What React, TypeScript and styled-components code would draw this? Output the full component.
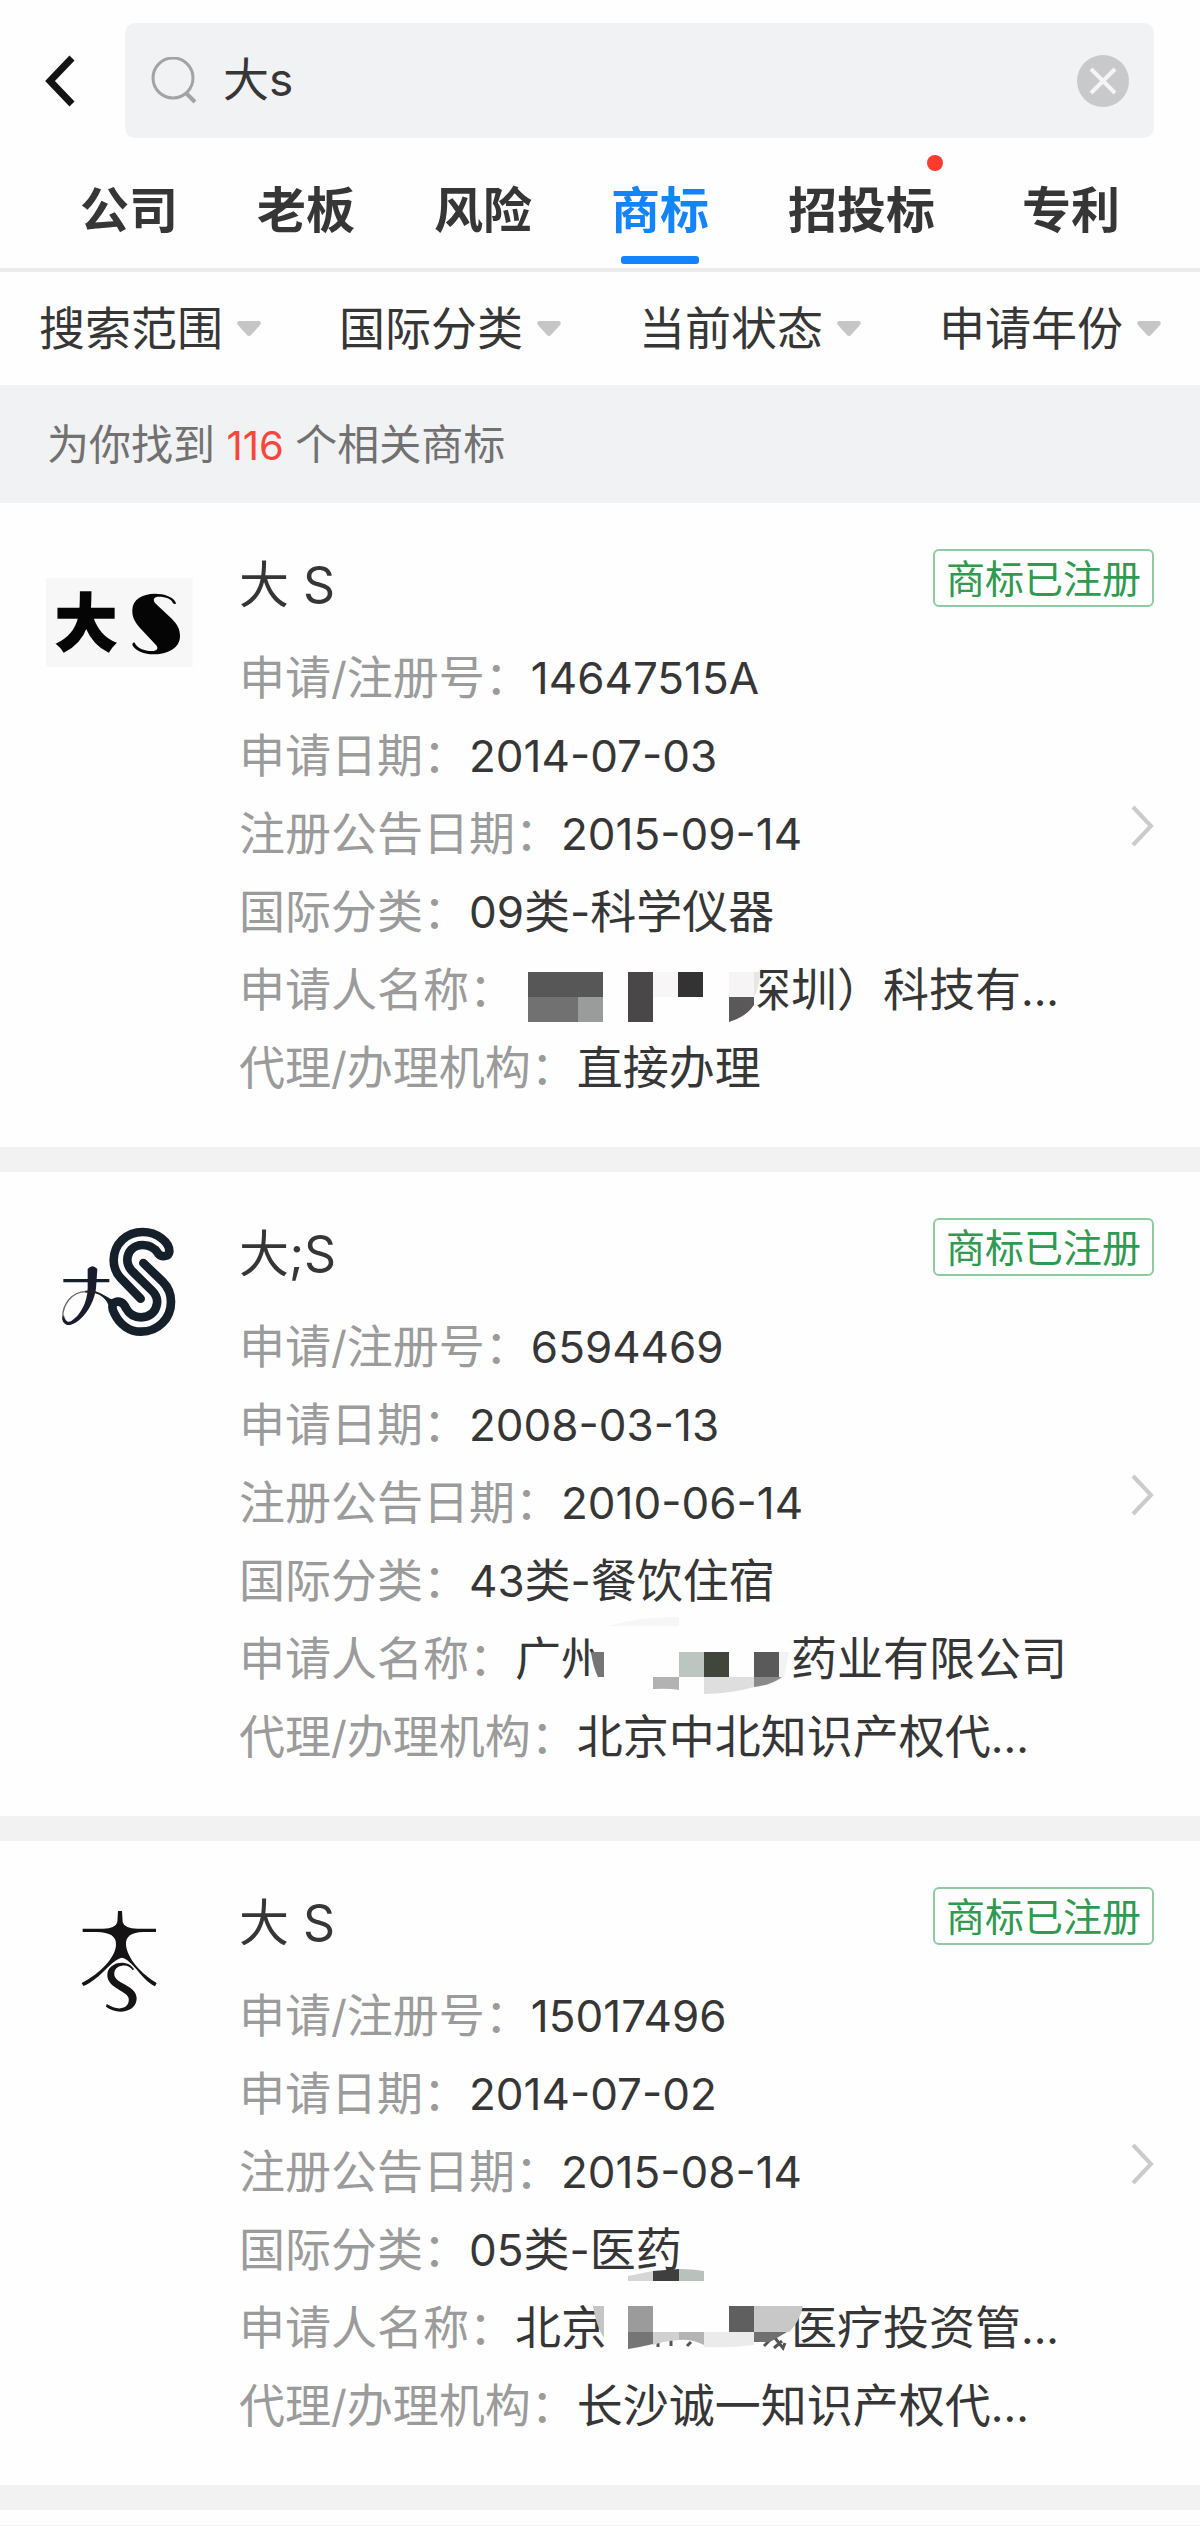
import React from "react";
import styled, { createGlobalStyle } from "styled-components";

const cjk = '"Noto Sans CJK SC", sans-serif';
const latin = 'Inter, "Noto Sans CJK SC", sans-serif';

const GlobalStyle = createGlobalStyle`
  *, *::before, *::after { box-sizing: border-box; }
  body { margin: 0; background: #fefefe; font-family: ${cjk}; color: #363636; }
  button, input, select { font: inherit; color: inherit; border: 0; background: none; margin: 0; padding: 0; outline: none; }
  button, select { cursor: pointer; }
  svg { display: block; }
`;

const Page = styled.div`
  display: flex;
  flex-direction: column;
`;

const TopBar = styled.header`
  display: flex;
  align-items: center;
  padding: 23px 46px 0 0;
`;

const BackButton = styled.button`
  flex: none;
  display: flex;
  padding: 30px 49px 30px 43px;
`;

const SearchBox = styled.label`
  flex: 1;
  min-width: 0;
  height: 115px;
  display: flex;
  align-items: center;
  padding: 0 25px 0 26px;
  border-radius: 10px;
  background: #f1f2f4;
`;

const SearchInput = styled.input`
  flex: 1;
  min-width: 0;
  margin: 0 24px;
  padding-bottom: 4px;
  font-family: ${latin};
  font-size: 46px;
  line-height: 68px;
`;

const TabBar = styled.nav`
  display: flex;
  justify-content: space-between;
  height: 134px;
  padding: 35px 80px 0;
  border-bottom: 4px solid #ebebeb;
`;

const Tab = styled.button<{ $active?: boolean; $dot?: boolean }>`
  position: relative;
  padding: 0 ${(p) => (p.$dot ? 8 : 0)}px 27px 0;
  height: 95px;
  font-size: 49px;
  line-height: 68px;
  font-weight: 700;
  white-space: nowrap;
  color: ${(p) => (p.$active ? "#1384fb" : "#363636")};
`;

const Underline = styled.span`
  position: absolute;
  left: 10px;
  right: 10px;
  bottom: 4px;
  height: 8px;
  border-radius: 3px;
  background: #1384fb;
`;

const Dot = styled.span`
  position: absolute;
  top: -18px;
  right: 0;
  width: 16px;
  height: 16px;
  border-radius: 50%;
  background: #fd3b2f;
`;

const FilterBar = styled.div`
  display: grid;
  grid-template-columns: repeat(4, 1fr);
  height: 113px;
`;

const Filter = styled.label`
  display: flex;
  align-items: center;
  gap: 14px;
  padding-left: 39px;
`;

const FilterSelect = styled.select`
  appearance: none;
  padding-bottom: 8px;
  font-size: 46px;
  line-height: 68px;
`;

const Summary = styled.p`
  margin: 0;
  padding: 23px 47px 27px;
  background: #f1f2f3;
  color: #717171;
  font-size: 42px;
  line-height: 68px;
`;

const Count = styled.strong`
  margin: 0 2px;
  font-family: ${latin};
  font-weight: 400;
  font-size: 40px;
  line-height: 1;
  color: #f8463c;
`;

const Results = styled.main`
  display: flex;
  flex-direction: column;
  gap: 25px;
  padding-bottom: 25px;
  background: #f2f2f2;
`;

const Card = styled.article`
  display: flex;
  padding: 46px 46px 44px;
  background: #fefefe;
`;

const Thumb = styled.svg`
  flex: none;
  width: 148px;
  height: 148px;
  margin-right: 45px;
`;

const Body = styled.div`
  flex: 1;
  min-width: 0;
`;

const Title = styled.h2`
  margin: 0 0 22px;
  font-family: ${cjk};
  font-weight: 400;
  font-size: 50px;
  line-height: 64px;
`;

const TitleLatin = styled.span`
  font-family: ${latin};
  line-height: 1;
`;

/* The badge sits at the top edge and the arrow at the card's middle. */
const Side = styled.div`
  flex: none;
  display: grid;
  grid-template-rows: 1fr auto 1fr;
  justify-items: end;
  align-items: start;
  margin-left: -120px;
`;

const Badge = styled.span`
  height: 58px;
  padding: 0 11px;
  border: 2px solid #8fcba2;
  border-radius: 6px;
  color: #2f9a50;
  font-size: 39px;
  line-height: 51px;
`;

const Fields = styled.dl`
  margin: 0;
`;

const Field = styled.div`
  display: flex;
  height: 78px;
  font-size: 46px;
  line-height: 78px;
  white-space: nowrap;
`;

const Name = styled.dt`
  color: #9b9b9b;
`;

const Value = styled.dd`
  margin: 0;
  display: flex;
`;

const Latin = styled.span`
  font-family: ${latin};
  font-size: 44px;
  line-height: 1;
`;

const Censor = styled.svg`
  flex: none;
  position: relative;
  height: 78px;
  overflow: visible;
`;

const OpenButton = styled.button`
  display: flex;
`;

const NextCard = styled.div`
  height: 16px;
  border-bottom: 1px solid #ededed;
`;

/* Digits and punctuation are set in the Latin face, Chinese in the CJK face. */
function Mixed({ text }: { text: string }) {
  const runs = text.match(/[\x20-\x7e]+|[^\x20-\x7e]+/g) ?? [];
  return (
    <span>
      {runs.map((run, i) => (/^[\x20-\x7e]/.test(run) ? <Latin key={i}>{run}</Latin> : run))}
    </span>
  );
}

function BoldLogo() {
  return (
    <Thumb viewBox="138 24 444 444" role="img" aria-label="大S">
      <rect x="138" y="112" width="440" height="266" fill="#f7f7f7" />
      <text
        x="165"
        y="315"
        fontFamily='"Noto Sans CJK SC", sans-serif'
        fontWeight="900"
        fontSize="186"
        fill="#050505"
        stroke="#050505"
        strokeWidth="5"
      >
        大
      </text>
      <path
        fill="#050505"
        d="M528 186C522 168 492 158 465 158C426 159 398 174 397 207C396 228 405 243 420 261L468 312C477 322 471 330 456 330C432 330 411 321 404 305C399 303 396 308 398 314C408 330 435 341 465 340C504 339 540 321 540 285C540 264 531 249 516 234L465 186C458 174 462 167 477 167C498 167 516 174 519 187C522 190 528 190 528 186Z"
      />
    </Thumb>
  );
}

function TubeLogo() {
  return (
    <Thumb viewBox="138 111 444 444" role="img" aria-label="大S">
      <path
        fill="none"
        stroke="#15202a"
        strokeWidth="26"
        strokeLinecap="round"
        strokeLinejoin="round"
        d="M422 353L362 291C344 272 341 255 341 237C342 188 380 153 428 153C472 153 509 184 508 212C506 228 484 229 475 218C465 201 451 192 428 192C400 192 382 212 382 237C382 252 388 262 398 272L457 330C470 343 473 354 471 368C467 394 449 409 423 409C402 409 387 399 378 382C370 362 356 359 345 364C334 370 336 385 343 397C360 432 389 452 423 452C474 452 513 413 513 362C513 338 505 319 488 302L430 246"
      />
      <path stroke="#15202a" strokeWidth="10" d="M190 299H328" />
      <path
        fill="#1a1c2e"
        d="M263 264Q277 248 292 264L288 322C282 372 246 424 210 432C196 434 186 424 186 408L192 402C194 420 204 426 214 420C240 404 262 366 263 322Z"
      />
      <path fill="none" stroke="#666" strokeWidth="4" d="M188 410C188 370 214 333 258 332" />
      <path fill="none" stroke="#222" strokeWidth="6" d="M256 332C292 328 310 342 330 366" />
      <path fill="#15202a" d="M300 338C316 342 326 352 342 358L332 388C326 368 314 350 300 338Z" />
    </Thumb>
  );
}

function FigureLogo() {
  return (
    <Thumb viewBox="138 78 444 444" role="img" aria-label="大S">
      <path
        fill="#151314"
        d="M354 150H366L368 184Q374 203 412 203H468V213H430C394 214 376 226 378 252C382 294 426 340 470 366L465 376C424 356 398 296 365 290C332 298 302 354 250 375L245 366C300 338 346 290 348 252C350 226 330 214 290 213H248V203H310Q346 203 352 184Z"
      />
      <path
        fill="#151314"
        d="M398 328C392 316 378 312 366 314C345 316 339 335 345 348C356 370 410 376 410 412C410 440 385 452 362 452C345 451 330 446 318 437L320 429C335 438 348 443 362 442C380 440 388 428 386 412C382 390 325 382 322 345C320 318 345 304 368 305C385 306 396 314 402 325Z"
      />
    </Thumb>
  );
}

function CensorA() {
  return (
    <Censor width="230" viewBox="0 -3 230 78" aria-hidden="true">
      <path fill="#585757" d="M13 22h75v25H13z" />
      <path fill="#717171" d="M13 47h50v25H13z" />
      <path fill="#999c9b" d="M63 47h25v25H63z" />
      <path fill="#4a4748" d="M113 22h25v50h-25z" />
      <path fill="#f8f6f7" d="M138 22h25v25h-25z" />
      <path fill="#333" d="M163 22h25v25h-25z" />
      <path fill="#fefefe" d="M226 14h17v33l-3 16h-14z" />
      <path fill="#f6f4f5" d="M214 22h25v25h-25z" />
      <path fill="#e6e6e6" d="M239 22h6q0 14-6 25z" />
      <path fill="#5a5859" d="M214 47h25v8q-8 12-25 17z" />
    </Censor>
  );
}

function CensorB() {
  return (
    <Censor width="184" viewBox="0 -3 184 78" aria-hidden="true">
      <path fill="#fefefe" d="M-16 12H2v50h-11z" />
      <path fill="#f6f6f6" d="M1 7q30-9 71-9v9z" />
      <path fill="#757575" d="M-16 33h13v25h-6q-5-10-7-25z" />
      <path fill="#bcc5bf" d="M72 33h25v25H72z" />
      <path fill="#41463d" d="M97 33h25v25H97z" />
      <path fill="#5a5a5a" d="M147 33h25v25h-25z" />
      <path fill="#f3f3f3" d="M172 33h10l-5 25h-5z" />
      <path fill="#b2b2b2" d="M46 58h26v13q-10-2-26-1z" />
      <path fill="#dedede" d="M97 58h50v10q-24 7-50 7z" />
      <path fill="#8a8a8a" d="M147 58h28q-10 8-28 10z" />
    </Censor>
  );
}

function CensorC() {
  return (
    <Censor width="184" viewBox="0 -3 184 78" aria-hidden="true">
      <path fill="#d6d6d6" d="M21-12l25-5v10H21z" />
      <path fill="#3f3f3f" d="M46-17l26-2v12H46z" />
      <path fill="#b9c1bd" d="M72-19q14 0 25 2v10H72z" />
      <path fill="#fefefe" d="M-14 12H2v26l-8 0z" />
      <path fill="#c6c6c6" d="M-14 18h11v32q-8-12-11-32z" />
      <path fill="#9b9b9b" d="M21 18h25v26H21z" />
      <path fill="#757575" d="M21 44h25v12q-12 3-25 5z" />
      <path
        fill="none"
        stroke="#555"
        strokeWidth="3"
        d="M51 59v-5M64 58v-6M80 58l4-4M157 58l5-5M168 50l8 10 2-5M167 60l8-7"
      />
      <path fill="#d0d0d0" d="M46 44h26v8q-16 1-26 5z" />
      <path fill="#b4b4b4" d="M72 44h25v13q-12-6-25-5z" />
      <path fill="#ebebeb" d="M97 44h50v13q-24 3-50 2z" />
      <path fill="#5f5f5f" d="M122 18h25v26h-25z" />
      <path fill="#c8c8c8" d="M147 18h49q-4 17-14 26h-35z" />
      <path fill="#707070" d="M147 44h33l-17 10h-16z" />
    </Censor>
  );
}

type Item = {
  title: string;
  suffix: string;
  Logo: () => React.ReactElement;
  fields: [string, React.ReactNode][];
};

const items: Item[] = [
  {
    title: "大",
    suffix: " S",
    Logo: BoldLogo,
    fields: [
      ["申请/注册号：", <Mixed text="14647515A" />],
      ["申请日期：", <Mixed text="2014-07-03" />],
      ["注册公告日期：", <Mixed text="2015-09-14" />],
      ["国际分类：", <Mixed text="09类-科学仪器" />],
      ["申请人名称：", <><CensorA /><Mixed text="深圳）科技有..." /></>],
      ["代理/办理机构：", <Mixed text="直接办理" />],
    ],
  },
  {
    title: "大",
    suffix: ";S",
    Logo: TubeLogo,
    fields: [
      ["申请/注册号：", <Mixed text="6594469" />],
      ["申请日期：", <Mixed text="2008-03-13" />],
      ["注册公告日期：", <Mixed text="2010-06-14" />],
      ["国际分类：", <Mixed text="43类-餐饮住宿" />],
      ["申请人名称：", <><Mixed text="广州" /><CensorB /><Mixed text="药业有限公司" /></>],
      ["代理/办理机构：", <Mixed text="北京中北知识产权代..." />],
    ],
  },
  {
    title: "大",
    suffix: " S",
    Logo: FigureLogo,
    fields: [
      ["申请/注册号：", <Mixed text="15017496" />],
      ["申请日期：", <Mixed text="2014-07-02" />],
      ["注册公告日期：", <Mixed text="2015-08-14" />],
      ["国际分类：", <Mixed text="05类-医药" />],
      ["申请人名称：", <><Mixed text="北京" /><CensorC /><Mixed text="医疗投资管..." /></>],
      ["代理/办理机构：", <Mixed text="长沙诚一知识产权代..." />],
    ],
  },
];

const tabs = ["公司", "老板", "风险", "商标", "招投标", "专利"];
const filters = ["搜索范围", "国际分类", "当前状态", "申请年份"];

export default function App() {
  const [query, setQuery] = React.useState("大s");
  const [active, setActive] = React.useState("商标");

  return (
    <Page>
      <GlobalStyle />
      <TopBar>
        <BackButton aria-label="返回">
          <svg width="33" height="54" viewBox="0 0 33 54" fill="none" stroke="#141414" strokeWidth="7">
            <path d="M29 4L7 27L29 50" />
          </svg>
        </BackButton>
        <SearchBox>
          <svg width="48" height="48" viewBox="0 0 48 48" fill="none" stroke="#a3a3a3" strokeWidth="3">
            <circle cx="22" cy="21" r="20" />
            <path d="M35 36L44 45" strokeWidth="4" />
          </svg>
          <SearchInput
            type="text"
            aria-label="搜索"
            value={query}
            onChange={(e) => setQuery(e.target.value)}
          />
          <button type="button" aria-label="清除" onClick={() => setQuery("")}>
            <svg width="52" height="52" viewBox="0 0 52 52">
              <circle cx="26" cy="26" r="26" fill="#c9c9cb" />
              <path d="M14 14L38 38M38 14L14 38" stroke="#f5f5f6" strokeWidth="4" />
            </svg>
          </button>
        </SearchBox>
      </TopBar>

      <TabBar>
        {tabs.map((name) => (
          <Tab key={name} $active={name === active} $dot={name === "招投标"} onClick={() => setActive(name)}>
            {name}
            {name === active && <Underline />}
            {name === "招投标" && <Dot />}
          </Tab>
        ))}
      </TabBar>

      <FilterBar>
        {filters.map((name) => (
          <Filter key={name}>
            <FilterSelect aria-label={name}>
              <option>{name}</option>
            </FilterSelect>
            <svg width="24" height="16" viewBox="0 0 24 16" fill="#c6c6c6">
              <path d="M2 0H22Q25 1 23 4L14 14Q12 16 10 14L1 4Q-1 1 2 0Z" />
            </svg>
          </Filter>
        ))}
      </FilterBar>

      <Summary>
        为你找到 <Count>116</Count> 个相关商标
      </Summary>

      <Results>
        {items.map(({ title, suffix, Logo, fields }, i) => (
          <Card key={i}>
            <Logo />
            <Body>
              <Title>
                {title}
                <TitleLatin>{suffix}</TitleLatin>
              </Title>
              <Fields>
                {fields.map(([name, value]) => (
                  <Field key={name}>
                    <Name>
                      <Mixed text={name} />
                    </Name>
                    <Value>{value}</Value>
                  </Field>
                ))}
              </Fields>
            </Body>
            <Side>
              <Badge>商标已注册</Badge>
              <OpenButton aria-label="查看详情">
                <svg width="24" height="42" viewBox="0 0 24 42" fill="none" stroke="#cbcbcb" strokeWidth="4">
                  <path d="M3 2L21 21L3 40" />
                </svg>
              </OpenButton>
            </Side>
          </Card>
        ))}
      </Results>
      <NextCard />
    </Page>
  );
}
